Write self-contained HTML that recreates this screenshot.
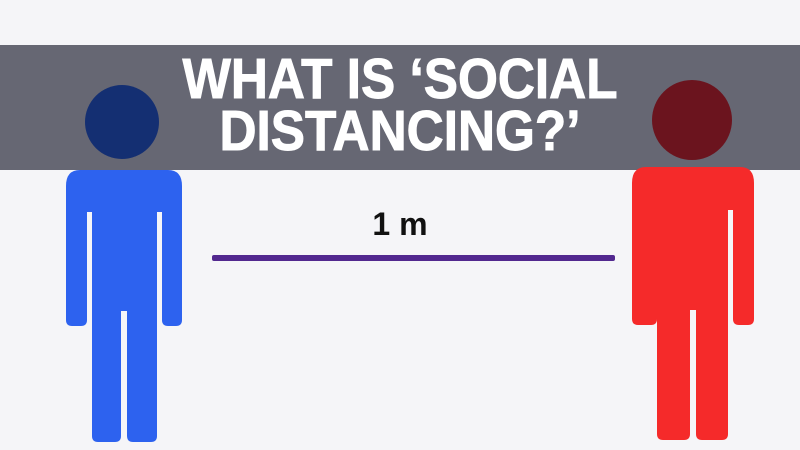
<!DOCTYPE html>
<html><head><style>
html,body{margin:0;padding:0;width:800px;height:450px;overflow:hidden;background:#f5f5f8;font-family:"Liberation Sans",sans-serif}
.banner{position:absolute;left:0;top:45px;width:800px;height:125px;background:#666773}
.title{position:absolute;left:0;top:53px;width:800px;text-align:center;color:#fff;font-weight:bold;font-size:57px;line-height:52px;transform:scaleX(0.9);transform-origin:400px 0;-webkit-text-stroke:1px #fff}
.m{position:absolute;left:340px;top:206px;width:120px;text-align:center;font-size:32px;font-weight:bold;color:#111}
.line{position:absolute;left:212px;top:255px;width:403px;height:6px;background:#52288f;border-radius:2px}
svg{position:absolute;left:0;top:0}
</style></head><body>
<div class="banner"></div>
<svg width="800" height="450">
<circle cx="122" cy="122" r="37" fill="#142f72"/>
<path d="M80 170 H168 Q182 170 182 186 V320 Q182 326 176 326 H168 Q162 326 162 320 V212 H157 V436 Q157 442 151 442 H133 Q127 442 127 436 V311 H121 V436 Q121 442 115 442 H98 Q92 442 92 436 V212 H87 V320 Q87 326 81 326 H72 Q66 326 66 320 V186 Q66 170 80 170Z" fill="#2d62ef"/>
<circle cx="692" cy="120" r="40" fill="#6b141e"/>
<path d="M646 167 H740 Q754 167 754 183 V319 Q754 325 748 325 H739 Q733 325 733 319 V210 H728 V434 Q728 440 722 440 H702 Q696 440 696 434 V310 H690 V434 Q690 440 684 440 H663 Q657 440 657 434 V210 H662 V210 H657 V319 Q657 325 651 325 H638 Q632 325 632 319 V183 Q632 167 646 167Z" fill="#f52a2a"/>
</svg>
<div class="title">WHAT IS ‘SOCIAL<br>DISTANCING?’</div>
<div class="m">1 m</div>
<div class="line"></div>
</body></html>
